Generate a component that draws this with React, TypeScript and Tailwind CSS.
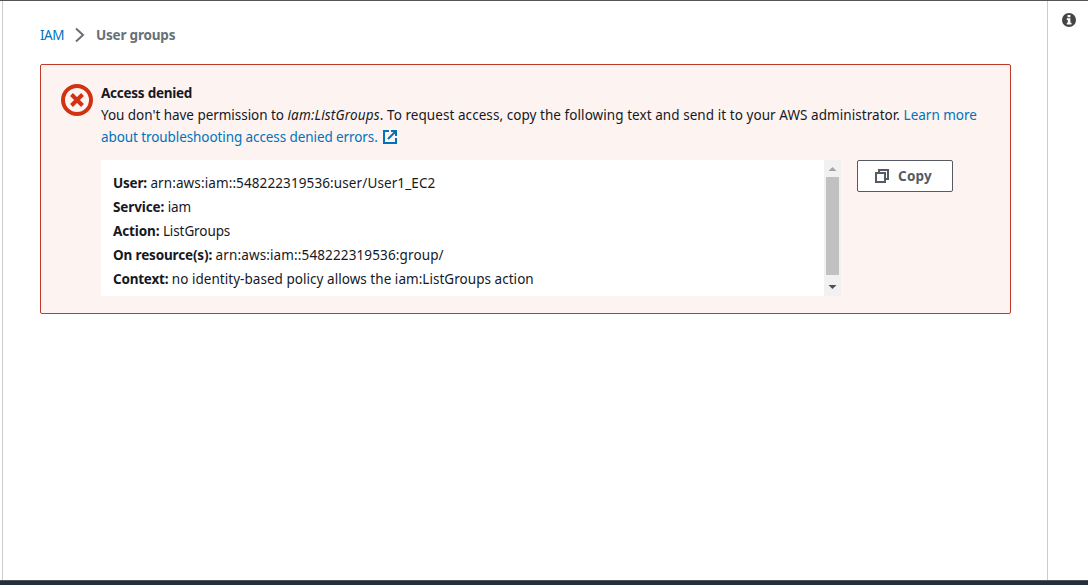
import React from 'react';

const details = [
  { label: 'User:', value: 'arn:aws:iam::548222319536:user/User1_EC2', labelTracking: 'tracking-[-0.2px]', tracking: 'tracking-[0.11px]' },
  { label: 'Service:', value: 'iam', labelTracking: 'tracking-[-0.12px]', tracking: 'tracking-[-0.12px]' },
  { label: 'Action:', value: 'ListGroups', labelTracking: 'tracking-[-0.12px]', tracking: 'tracking-[-0.1px]' },
  { label: 'On resource(s):', value: 'arn:aws:iam::548222319536:group/', labelTracking: 'tracking-[-0.15px]', tracking: 'tracking-[0.13px]' },
  { label: 'Context:', value: 'no identity-based policy allows the iam:ListGroups action', labelTracking: 'tracking-[-0.22px]', tracking: 'tracking-[0.04px]' },
];

function Breadcrumbs() {
  return (
    <nav className="flex h-[22px] items-center whitespace-nowrap leading-[22px]">
      <a className="w-[25px] tracking-[-0.5px] text-[#0073bb]">IAM</a>
      <svg className="ml-[10px] mr-[11px] h-4 w-[10px] text-[#687078]" viewBox="0 0 10 16" fill="none" stroke="currentColor" strokeWidth="2">
        <path d="M1 1.5 8 8 1 14.5" />
      </svg>
      <span className="font-bold tracking-[-0.2px] text-[#687078]">User groups</span>
    </nav>
  );
}

function Scrollbar() {
  return (
    <div className="flex w-[17px] shrink-0 flex-col items-center bg-[#f1f1f1]">
      <svg className="h-[17px] w-[17px] shrink-0" viewBox="0 0 17 17">
        <path d="M4.5 11h8l-4-4z" fill="#a3a3a3" />
      </svg>
      <div className="h-[98px] w-[13px] bg-[#c1c1c1]" />
      <svg className="mt-1 h-[17px] w-[17px] shrink-0" viewBox="0 0 17 17">
        <path d="M4.5 6h8l-4 4z" fill="#505050" />
      </svg>
    </div>
  );
}

export default function App() {
  return (
    <div className="flex h-[585px] w-[1088px] flex-col overflow-hidden border-t border-[#545454] bg-white font-['Noto_Sans',sans-serif] text-[13.5px] text-[#16191f]">
      <div className="flex h-[579px] shrink-0">
        <div className="w-[3px] shrink-0 border-r border-[#cccccc]" />
        <main className="w-[1044px] shrink-0 pl-[37px] pt-[23px]">
          <Breadcrumbs />
          <section className="mt-[18px] flex h-[250px] w-[971px] rounded-[2px] border border-[#c0392b] bg-[#fdf3f1] pl-5 pt-[17px]">
            <svg className="mt-0.5 h-8 w-8 shrink-0" viewBox="0 0 32 32" fill="none" stroke="#d13212">
              <circle cx="16" cy="16" r="14" strokeWidth="4" />
              <path d="m10.5 10.5 11 11m0-11-11 11" strokeWidth="4" />
            </svg>
            <div className="ml-2 whitespace-nowrap leading-[22px]">
              <h1 className="font-bold tracking-[-0.25px]">Access denied</h1>
              <p>
                <span className="tracking-[-0.04px]">You don't have permission to </span>
                <em className="tracking-[0.17px]">iam:ListGroups</em>
                <span className="tracking-[0.06px]">. To request access, copy the following text and send it to your AWS administrator. </span>
                <a className="text-[#0073bb]">Learn more</a>
              </p>
              <a className="flex items-center text-[#0073bb]">
                <span className="tracking-[-0.09px]">about troubleshooting access denied errors.</span>
                <svg className="ml-[5px] h-[14px] w-[14px]" viewBox="0 0 14 14" fill="none" stroke="currentColor" strokeWidth="2">
                  <path d="M6 1H1v12h12V8M8 1h5v5M13 1 5 9" />
                </svg>
              </a>
              <div className="mt-3 flex">
                <div className="flex h-[136px] w-[740px] bg-white">
                  <div className="flex-1 pl-3 pt-[11px] leading-6">
                    {details.map((d) => (
                      <div key={d.label}>
                        <b className={d.labelTracking}>{d.label}</b> <span className={d.tracking}>{d.value}</span>
                      </div>
                    ))}
                  </div>
                  <Scrollbar />
                </div>
                <button className="ml-4 flex h-8 w-24 items-center rounded-[2px] border border-[#545b64] bg-white pl-[17px] font-bold text-[#545b64]">
                  <svg className="h-[14px] w-[14px]" viewBox="0 0 14 14" fill="none" stroke="currentColor" strokeWidth="2">
                    <path d="M1 4h9v9H1zM4 4V1h9v9h-3" />
                  </svg>
                  <span className="ml-[9px] tracking-[0.25px]">Copy</span>
                </button>
              </div>
            </div>
          </section>
        </main>
        <aside className="flex flex-1 items-start border-l border-[#cccccc] pl-[14px] pt-3">
          <svg className="h-[14px] w-[14px]" viewBox="0 0 14 14">
            <circle cx="7" cy="7" r="7" fill="#444444" />
            <path d="M5.6 2h2.8v2.2H5.6zM4.8 5.2h3.6v4.5h1.1v1.7H4.8V9.7h1V6.9h-1z" fill="white" />
          </svg>
        </aside>
      </div>
      <footer className="h-[5px] shrink-0 border-t border-[#4b5358] bg-[#232f3e]" />
    </div>
  );
}
